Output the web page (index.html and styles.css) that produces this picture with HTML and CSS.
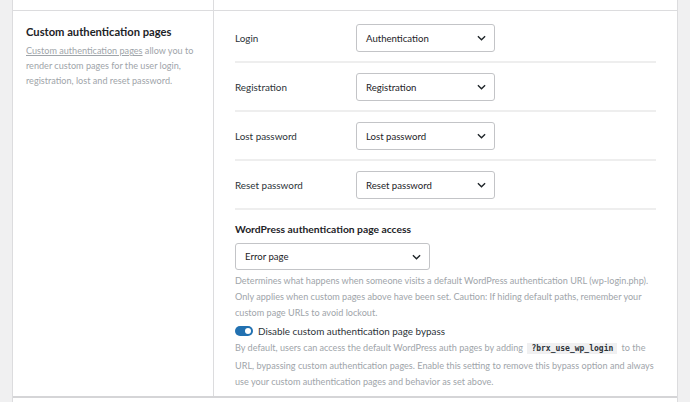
FILE: index.html
```html
<!DOCTYPE html>
<html>
<head>
<meta charset="utf-8">
<link rel="stylesheet" href="styles.css">
</head>
<body>
<div class="panel">
  <div class="prev-row"></div>
  <div class="setting">
    <div class="side">
      <h3 class="side-title">Custom authentication pages</h3>
      <p class="side-desc"><a class="side-link" href="#">Custom authentication pages</a> allow you to render custom pages for the user login, registration, lost and reset password.</p>
    </div>
    <div class="main">
      <div class="field-row">
        <span class="field-label">Login</span>
        <div class="select select-sm"><span>Authentication</span><svg class="chev" viewBox="0 0 10 6" width="9" height="6"><path d="M1 1l4 4 4-4" fill="none" stroke="#1d2327" stroke-width="1.5"/></svg></div>
      </div>
      <div class="field-row">
        <span class="field-label">Registration</span>
        <div class="select select-sm"><span>Registration</span><svg class="chev" viewBox="0 0 10 6" width="9" height="6"><path d="M1 1l4 4 4-4" fill="none" stroke="#1d2327" stroke-width="1.5"/></svg></div>
      </div>
      <div class="field-row">
        <span class="field-label">Lost password</span>
        <div class="select select-sm"><span>Lost password</span><svg class="chev" viewBox="0 0 10 6" width="9" height="6"><path d="M1 1l4 4 4-4" fill="none" stroke="#1d2327" stroke-width="1.5"/></svg></div>
      </div>
      <div class="field-row">
        <span class="field-label">Reset password</span>
        <div class="select select-sm"><span>Reset password</span><svg class="chev" viewBox="0 0 10 6" width="9" height="6"><path d="M1 1l4 4 4-4" fill="none" stroke="#1d2327" stroke-width="1.5"/></svg></div>
      </div>
      <div class="access">
        <h4 class="access-title">WordPress authentication page access</h4>
        <div class="select select-lg"><span>Error page</span><svg class="chev" viewBox="0 0 10 6" width="9" height="6"><path d="M1 1l4 4 4-4" fill="none" stroke="#1d2327" stroke-width="1.5"/></svg></div>
        <p class="desc desc-first">Determines what happens when someone visits a default WordPress authentication URL (wp-login.php). Only applies when custom pages above have been set. Caution: If hiding default paths, remember your custom page URLs to avoid lockout.</p>
        <label class="toggle-row">
          <span class="toggle"><span class="knob"></span></span>
          <span class="toggle-label">Disable custom authentication page bypass</span>
        </label>
        <p class="desc desc-second">By default, users can access the default WordPress auth pages by adding <code class="code">?brx_use_wp_login</code> to the URL, bypassing custom authentication pages. Enable this setting to remove this bypass option and always use your custom authentication pages and behavior as set above.</p>
      </div>
    </div>
  </div>
</div>
</body>
</html>
```
FILE: styles.css
```css
* { box-sizing: border-box; }
html, body { margin: 0; padding: 0; }
body {
  background: #f0f0f1;
  font-family: "Lato", "Noto Sans", sans-serif;
  color: #1d2327;
  height: 402px;
  overflow: hidden;
}
.panel {
  margin: 0 12px 0 12px;
  background: #fff;
  border-left: 1px solid #dcdcde;
  border-right: 1px solid #dcdcde;
  height: 402px;
}
.prev-row {
  height: 11px;
  border-bottom: 1px solid #dcdcde;
}
.setting {
  display: grid;
  grid-template-columns: 201px 1fr;
  border-bottom: 2px solid #d5d5d7;
}
.side {
  border-right: 1px solid #dcdcde;
  margin-top: -11px;
  padding: 24px 14px 0 13px;
}
.side-title {
  margin: 0;
  font-size: 11.2px;
  font-weight: 700;
  line-height: 16px;
}
.side-desc {
  margin: 3px 0 0;
  font-size: 9.1px;
  line-height: 15px;
  color: #a0a5aa;
}
.side-link {
  color: #a0a5aa;
  text-decoration: underline;
}
.main {
  padding: 3px 21px 5px 21px;
}
.field-row {
  display: flex;
  align-items: center;
  padding: 10px 0 9px;
  border-bottom: 2px solid #eeeeee;
}
.field-label {
  width: 121px;
  font-size: 9.9px;
  color: #2c3338;
}
.select {
  display: flex;
  align-items: center;
  justify-content: space-between;
  height: 28px;
  border: 1px solid #c3c4c7;
  border-radius: 3px;
  padding: 0 8px 0 9px;
  font-size: 9.6px;
  color: #1d2327;
  background: #fff;
}
.select-sm { width: 139px; }
.select-lg { width: 195px; height: 27px; }
.chev { display: block; }
.access {
  padding-top: 12px;
}
.access-title {
  margin: 0 0 7px;
  font-size: 10.3px;
  font-weight: 700;
  line-height: 14px;
}
.desc {
  margin: 0 -4px 0 0;
  font-size: 9.1px;
  line-height: 16.5px;
  color: #a0a5aa;
}
.desc-first { margin-top: 3px; line-height: 16px; }
.desc-second { margin-top: 1px; }
.toggle-row {
  display: flex;
  align-items: center;
  gap: 5px;
  margin-top: 2px;
  height: 16px;
}
.toggle {
  position: relative;
  width: 18px;
  height: 10px;
  border-radius: 5px;
  background: #2271b1;
}
.knob {
  position: absolute;
  top: 2px;
  right: 2px;
  width: 6px;
  height: 6px;
  border-radius: 50%;
  background: #fff;
}
.toggle-label {
  font-size: 9.9px;
  color: #2c3338;
}
.code {
  font-family: "DejaVu Sans Mono", monospace;
  font-size: 8px;
  font-weight: 700;
  color: #2c3338;
  background: #f0f0f1;
  padding: 1px 4px;
  margin: 0 2px;
  white-space: nowrap;
}
```
